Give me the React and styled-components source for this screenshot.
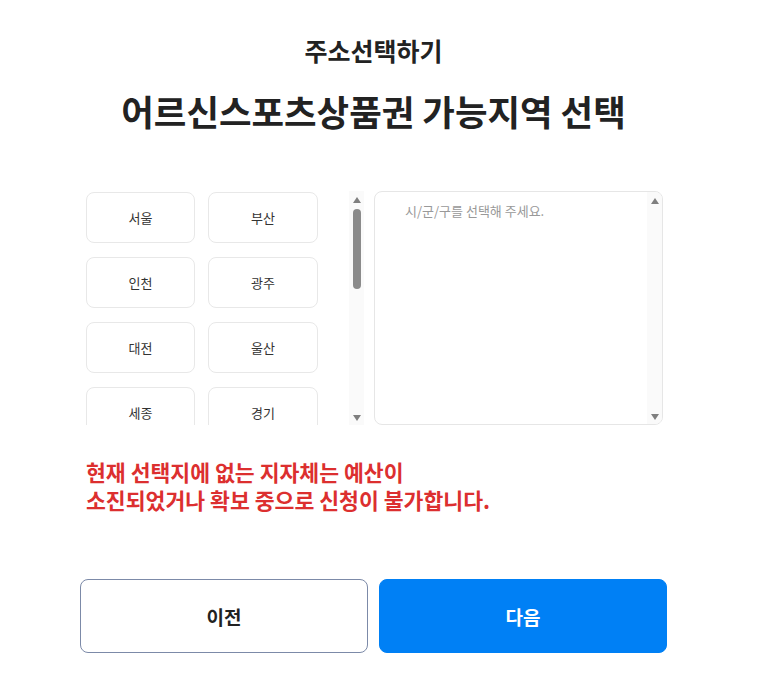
import React, { useState } from 'react';
import styled, { createGlobalStyle } from 'styled-components';

const GlobalStyle = createGlobalStyle`
  body {
    margin: 0;
    background: #fff;
    font-family: "Noto Sans CJK KR", "Noto Sans", sans-serif;
    color: #222;
  }
`;

const Wrap = styled.div`
  width: 587px;
  margin-left: 80px;
  padding-top: 35px;
`;

const SubTitle = styled.h2`
  margin: 0;
  text-align: center;
  font-size: 25px;
  line-height: 30px;
  font-weight: 700;
  color: #222;
`;

const Title = styled.h1`
  margin: 23px 0 0;
  text-align: center;
  font-size: 35.4px;
  line-height: 46px;
  font-weight: 700;
  color: #222;
`;

const Panels = styled.div`
  display: flex;
  gap: 10px;
  margin-top: 57px;
  height: 234px;
`;

const RegionPanel = styled.div`
  display: flex;
  width: 284px;
  flex-shrink: 0;
`;

const RegionViewport = styled.div`
  flex: 1;
  overflow: hidden;
  padding: 1px 0 0 6px;
`;

const RegionGrid = styled.div`
  display: grid;
  grid-template-columns: 109px 110px;
  column-gap: 13px;
  row-gap: 14px;
`;

const RegionButton = styled.button`
  height: 51px;
  box-sizing: border-box;
  border: 1px solid ${p => (p.active ? '#0080f5' : '#e8e8e8')};
  border-radius: 8px;
  background: #fff;
  font-family: inherit;
  font-size: 13px;
  color: ${p => (p.active ? '#0080f5' : '#333')};
  cursor: pointer;
  padding: 0;
`;

const ScrollTrack = styled.div`
  width: 15px;
  flex-shrink: 0;
  background: #fafafa;
  display: flex;
  flex-direction: column;
  align-items: center;
  padding: 6px 0 4px;
  box-sizing: border-box;
`;

const Arrow = styled.span`
  width: 0;
  height: 0;
  border-left: 4px solid transparent;
  border-right: 4px solid transparent;
  ${p => (p.down
    ? 'border-top: 6px solid #7f7f7f; margin-top: auto;'
    : 'border-bottom: 6px solid #7f7f7f;')}
`;

const Thumb = styled.span`
  width: 8px;
  height: 80px;
  margin-top: 6px;
  border-radius: 4px;
  background: #8b8b8b;
`;

const CityBox = styled.div`
  display: flex;
  width: 289px;
  box-sizing: border-box;
  border: 1px solid #e6e6e6;
  border-radius: 8px;
  overflow: hidden;
`;

const CityList = styled.div`
  flex: 1;
  padding: 9px 0 0 30px;
`;

const Placeholder = styled.p`
  margin: 0;
  font-size: 13px;
  line-height: 20px;
  color: #999;
`;

const Notice = styled.p`
  margin: 33px 0 0 6px;
  font-size: 21.6px;
  line-height: 28px;
  font-weight: 700;
  color: #dc2f2f;
`;

const Actions = styled.div`
  display: grid;
  grid-template-columns: 288px 288px;
  column-gap: 11px;
  margin-top: 65px;
`;

const ActionButton = styled.button`
  height: 74px;
  box-sizing: border-box;
  border-radius: 8px;
  font-family: inherit;
  font-size: 19px;
  font-weight: 700;
  cursor: pointer;
  border: 1px solid ${p => (p.primary ? '#0080f5' : '#7c8aa8')};
  background: ${p => (p.primary ? '#0080f5' : '#fff')};
  color: ${p => (p.primary ? '#fff' : '#222')};
`;

const regions = [
  '서울', '부산', '인천', '광주', '대전', '울산', '세종', '경기', '강원',
  '충북', '충남', '전북', '전남', '경북', '경남', '제주', '대구',
];

export default function App() {
  const [selected, setSelected] = useState(null);

  return (
    <>
      <GlobalStyle />
      <Wrap>
        <SubTitle>주소선택하기</SubTitle>
        <Title>어르신스포츠상품권 가능지역 선택</Title>
        <Panels>
          <RegionPanel>
            <RegionViewport>
              <RegionGrid>
                {regions.map(r => (
                  <RegionButton
                    key={r}
                    active={selected === r}
                    onClick={() => setSelected(r)}
                  >
                    {r}
                  </RegionButton>
                ))}
              </RegionGrid>
            </RegionViewport>
            <ScrollTrack>
              <Arrow />
              <Thumb />
              <Arrow down />
            </ScrollTrack>
          </RegionPanel>
          <CityBox>
            <CityList>
              <Placeholder>시/군/구를 선택해 주세요.</Placeholder>
            </CityList>
            <ScrollTrack>
              <Arrow />
              <Arrow down />
            </ScrollTrack>
          </CityBox>
        </Panels>
        <Notice>
          현재 선택지에 없는 지자체는 예산이
          <br />
          소진되었거나 확보 중으로 신청이 불가합니다.
        </Notice>
        <Actions>
          <ActionButton>이전</ActionButton>
          <ActionButton primary>다음</ActionButton>
        </Actions>
      </Wrap>
    </>
  );
}
